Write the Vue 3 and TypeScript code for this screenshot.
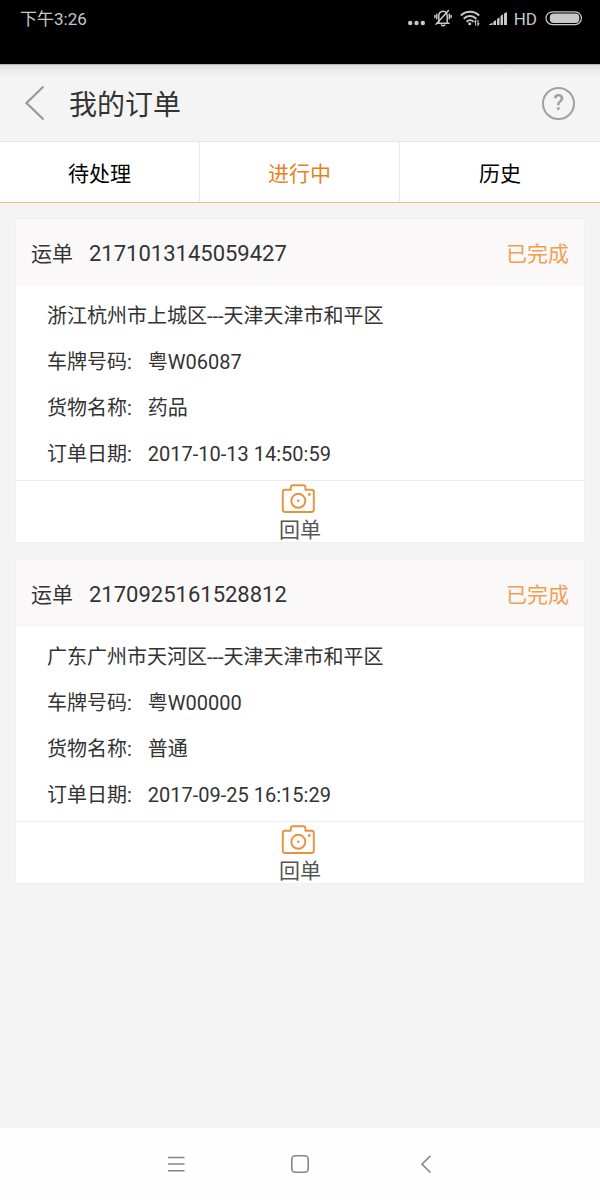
<script setup lang="ts">
import { ref } from 'vue'

interface Order {
  id: string
  status: string
  route: string
  plate: string
  goods: string
  date: string
}

const tabs: string[] = ['待处理', '进行中', '历史']
const activeTab = ref(1)

const orders: Order[] = [
  {
    id: '2171013145059427',
    status: '已完成',
    route: '浙江杭州市上城区---天津天津市和平区',
    plate: '粤W06087',
    goods: '药品',
    date: '2017-10-13 14:50:59',
  },
  {
    id: '2170925161528812',
    status: '已完成',
    route: '广东广州市天河区---天津天津市和平区',
    plate: '粤W00000',
    goods: '普通',
    date: '2017-09-25 16:15:29',
  },
]
</script>

<template>
  <div class="screen" lang="zh-CN">
    <div class="status-bar">
      <span>下午3:26</span>
      <div class="status-icons">
        <svg class="dots" width="18" height="20" viewBox="0 0 18 20" fill="currentColor" aria-hidden="true">
          <circle cx="2.200" cy="14" r="2.200" />
          <circle cx="8.500" cy="14" r="2.200" />
          <circle cx="14.800" cy="14" r="2.200" />
        </svg>
        <svg class="bell" width="18" height="20" viewBox="0 0 18 20" fill="none" stroke="currentColor" stroke-width="1.500" stroke-linecap="round" aria-hidden="true">
          <path d="M3.500 14.200h11.500M4.800 14V7.500C4.800 4 6.500 2.200 9 2.200s4.200 1.800 4.200 5.300V14M7.500 16c.6 1 2.600 1 3.200 0" />
          <path d="M2 15.200 14.500 1.500" />
          <path d="M2.800 5.300v4.500M.9 6.500v2M15.300 5.300v4.500M17.100 6.500v2" />
        </svg>
        <svg class="wifi" width="20" height="20" viewBox="0 0 20 20" fill="none" stroke="currentColor" stroke-width="2" aria-hidden="true">
          <path d="M.8 6.500C6 1.500 14 1.500 19.200 6.500" />
          <path d="M3.700 9.700c3.600-3.500 9-3.500 12.600 0" />
          <path d="M6.600 12.700c2-2 4.800-2 6.800 0" />
          <circle cx="9.700" cy="14.800" r="1.500" fill="currentColor" stroke="none" />
          <path d="M15.700 16.500v-5l-1.300 1.800M18 11v5l1.300-1.800" stroke-width="1.100" />
        </svg>
        <svg class="signal" width="20" height="20" viewBox="0 0 20 20" fill="currentColor" aria-hidden="true">
          <path d="M.5 16 4.500 13.500v2.500zM5.300 12.800 8 11v5H5.300zM9 10l2.500-1.700V16H9zM12.500 7 15 5.300V16h-2.500zM16 4.500 19 3v13h-3z" />
        </svg>
        <span class="hd">HD</span>
        <svg class="battery" width="38" height="20" viewBox="0 0 38 20" fill="none" aria-hidden="true">
          <rect x="1" y="2.800" width="35.400" height="12.800" rx="6.400" stroke="currentColor" stroke-width="1.200" />
          <rect x="4.800" y="4.500" width="29.500" height="9.400" rx="4" fill="currentColor" />
        </svg>
      </div>
    </div>

    <header class="title-bar">
      <button class="icon-button" type="button" aria-label="返回">
        <svg width="22" height="36" viewBox="0 0 22 36" fill="none" stroke="#999" stroke-width="2.200" aria-hidden="true">
          <path d="M19.500 1.500 2.500 18 19.500 34.500" />
        </svg>
      </button>
      <h1>我的订单</h1>
      <button class="icon-button help" type="button" aria-label="帮助">?</button>
    </header>

    <nav class="tabs">
      <button
        v-for="(tab, index) in tabs"
        :key="tab"
        type="button"
        class="tab"
        :class="{ active: index === activeTab }"
        @click="activeTab = index"
      >
        {{ tab }}
      </button>
    </nav>

    <main class="orders">
      <article v-for="order in orders" :key="order.id" class="card">
        <div class="card-head">
          <h2>运单</h2>
          <span class="order-id">{{ order.id }}</span>
          <span class="order-status">{{ order.status }}</span>
        </div>
        <div class="card-body">
          <p>{{ order.route }}</p>
          <p><span class="label">车牌号码:</span>{{ order.plate }}</p>
          <p><span class="label">货物名称:</span>{{ order.goods }}</p>
          <p><span class="label">订单日期:</span>{{ order.date }}</p>
        </div>
        <button class="receipt" type="button">
          <svg width="38" height="30" viewBox="0 0 38 30" fill="none" stroke="#e8923c" stroke-width="1.900" stroke-linejoin="round" aria-hidden="true">
            <path d="M4 5.800h5.800V3.500C9.800 2 10.600 1.200 12 1.200h10.200c1.400 0 2.200.8 2.200 2.300v2.300h6.200c1.400 0 2.200.8 2.200 2.200v17.800c0 1.400-.8 2.200-2.200 2.200H4c-1.400 0-2.200-.8-2.200-2.200V8C1.800 6.600 2.600 5.800 4 5.800z" />
            <circle cx="17.300" cy="16.800" r="7" />
            <circle cx="17.300" cy="16.800" r="1.300" fill="#e8923c" stroke="none" />
            <circle cx="28.300" cy="10.500" r="1.400" fill="#e8923c" stroke="none" />
          </svg>
          <span>回单</span>
        </button>
      </article>
    </main>

    <footer class="system-nav">
      <button type="button" aria-label="菜单">
        <svg width="20" height="20" viewBox="0 0 20 20" fill="none" stroke="#858585" stroke-width="1.500" aria-hidden="true">
          <path d="M2 3.500h16.500M2 10h16.500M2 16.700h16.500" />
        </svg>
      </button>
      <button type="button" aria-label="主页">
        <svg width="20" height="20" viewBox="0 0 20 20" fill="none" stroke="#858585" stroke-width="1.600" aria-hidden="true">
          <rect x="1.800" y="1.800" width="16.400" height="16.400" rx="3.500" />
        </svg>
      </button>
      <button type="button" aria-label="后退">
        <svg width="20" height="20" viewBox="0 0 20 20" fill="none" stroke="#858585" stroke-width="1.600" aria-hidden="true">
          <path d="M16.500 1.800 8 10.200 16.500 18.500" />
        </svg>
      </button>
    </footer>
  </div>
</template>

<style>
body {
  margin: 0;
  background: #f4f4f4;
}
</style>

<style scoped>
.screen {
  display: flex;
  flex-direction: column;
  min-height: 100vh;
  background: #f4f4f4;
  color: #333;
  font-family: Roboto, "Noto Sans CJK SC", sans-serif;
  font-size: 20px;
}

button {
  margin: 0;
  padding: 0;
  border: 0;
  background: none;
  color: inherit;
  font: inherit;
  cursor: pointer;
}

h1,
h2,
p {
  margin: 0;
  font-weight: 400;
}

svg {
  display: block;
  flex: none;
}

.status-bar {
  display: flex;
  align-items: flex-start;
  justify-content: space-between;
  height: 56px;
  padding: 8px 17px 0 20px;
  background: #000;
  color: #c8c8c8;
  font-size: 17px;
  line-height: 22px;
}

.status-icons {
  display: flex;
  align-items: center;
}

.bell,
.wifi,
.signal,
.battery {
  margin-left: 8px;
}

.hd {
  margin-left: 6px;
}

.title-bar {
  display: flex;
  align-items: center;
  height: 76px;
  padding: 1px 25px 0 24px;
  border-bottom: 1px solid #e6e6e6;
  background: linear-gradient(#8c8c8c 0, #dcdcdc 1px, #ececec 6px, #f4f4f4 14px);
}

.title-bar h1 {
  flex: 1;
  margin-left: 23px;
  padding-top: 6px;
  font-size: 28px;
  line-height: 40px;
}

.help {
  width: 33px;
  height: 33px;
  border: 2px solid #a0a0a0;
  border-radius: 50%;
  color: #a0a0a0;
  font-size: 22px;
  font-weight: 500;
  line-height: 28px;
}

.tabs {
  display: grid;
  grid-template-columns: repeat(3, 1fr);
  border-bottom: 1px solid #ecc17f;
  background: #fff;
}

.tab {
  height: 60px;
  border-right: 1px solid #e8e8e8;
  color: #000;
  font-size: 21px;
}

.tab:last-child {
  border-right: 0;
}

.tab.active {
  color: #e8821e;
}

.orders {
  display: flex;
  flex: 1;
  flex-direction: column;
  gap: 18px;
  padding: 16px;
}

.card {
  background: #fff;
  box-shadow: 0 0 1px #ddd;
}

.card-head {
  display: flex;
  align-items: baseline;
  padding: 20px 15px 17px;
  background: #faf8f9;
  font-size: 22px;
  line-height: 30px;
}

.card-head h2 {
  font-size: 21px;
}

.order-id {
  flex: 1;
  margin-left: 16px;
}

.order-status {
  color: #f0a050;
  font-size: 21px;
}

.card-body {
  display: flex;
  flex-direction: column;
  gap: 16px;
  padding: 15px 31px 11px;
  line-height: 30px;
}

.label {
  margin-right: 16px;
}

.receipt {
  display: flex;
  flex-direction: column;
  gap: 4px;
  align-items: center;
  width: 100%;
  padding-top: 3px;
  border-top: 1px solid #ececec;
  color: #555;
  font-size: 21px;
  line-height: 24px;
}

.system-nav {
  display: flex;
  align-items: center;
  justify-content: center;
  gap: 104px;
  height: 72px;
  background: #fefefe;
}
</style>
